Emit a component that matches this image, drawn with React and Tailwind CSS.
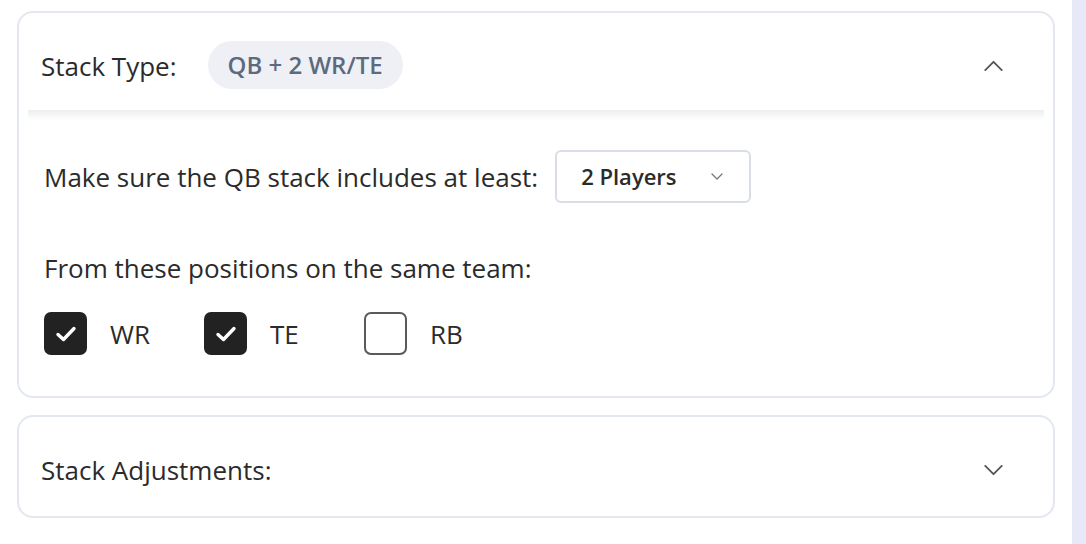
import React, { useState } from 'react';

const Chevron = ({ up, className }) => (
  <svg viewBox="0 0 20 12" className={className} fill="none" stroke="currentColor" strokeWidth="2" strokeLinecap="round" strokeLinejoin="round">
    {up ? <path d="M1 11 L10 2 L19 11" /> : <path d="M1 1 L10 10 L19 1" />}
  </svg>
);

const Check = ({ label, checked, onToggle }) => (
  <button onClick={onToggle} className="flex items-center gap-[23px] w-[160px]">
    <span
      className={
        'w-[43px] h-[43px] rounded-[7px] flex items-center justify-center ' +
        (checked ? 'bg-[#222222]' : 'bg-white border-2 border-[#5a5a5a]')
      }
    >
      {checked && (
        <svg viewBox="0 0 24 20" className="w-[24px] h-[20px]" fill="none" stroke="white" strokeWidth="3.4" strokeLinecap="round" strokeLinejoin="round">
          <path d="M4 10.5 L9.5 15.5 L20 4.5" />
        </svg>
      )}
    </span>
    <span className="text-[26px] leading-[36px] text-[#2b2b2b]">{label}</span>
  </button>
);

export default function App() {
  const [open, setOpen] = useState(true);
  const [positions, setPositions] = useState({ WR: true, TE: true, RB: false });

  const toggle = (key) => setPositions(prev => ({ ...prev, [key]: !prev[key] }));

  return (
    <div className="flex w-[1086px] h-[544px] bg-white overflow-hidden" style={{ fontFamily: '"Open Sans", "Noto Sans", sans-serif' }}>
      <div className="flex-1 flex flex-col gap-[17px] pt-[11px] px-[17px]">

        {/* Stack type panel */}
        <div className="border-2 border-[#e3e7ef] rounded-[16px] bg-white">
          <div className="flex items-center pl-[22px] pr-[50px] pt-[28px] pb-[21px]">
            <span className="text-[26px] leading-[36px] text-[#2b2b2b] pt-[2px]">Stack Type:</span>
            <span className="ml-[31px] h-[48px] px-[20px] rounded-full bg-[#eef0f5] flex items-center text-[24px] font-semibold text-[#5d6a7e]">
              QB + 2 WR/TE
            </span>
            <button onClick={() => setOpen(!open)} className="ml-auto text-[#555555] pt-[1px]">
              <Chevron up={open} className="w-[19px] h-[11px]" />
            </button>
          </div>
          <div className="mx-[9px] h-[10px] bg-gradient-to-b from-[#eceef1] to-white" />

          {open && (
            <div className="pl-[25px] pt-[30px] pb-[41px]">
              <div className="flex items-center gap-[17px]">
                <span className="text-[26px] leading-[36px] text-[#2b2b2b]">Make sure the QB stack includes at least:</span>
                <button className="w-[196px] h-[53px] border-2 border-[#d9dde5] rounded-[6px] flex items-center pl-[24px] pr-[26px]">
                  <span className="text-[22px] font-semibold text-[#2b2b2b]">2 Players</span>
                  <svg viewBox="0 0 12 7" className="ml-auto w-[12px] h-[7px]" fill="none" stroke="#777777" strokeWidth="1.3" strokeLinecap="round" strokeLinejoin="round">
                    <path d="M1 1 L6 6 L11 1" />
                  </svg>
                </button>
              </div>
              <div className="mt-[47px] text-[26px] leading-[36px] text-[#2b2b2b]">From these positions on the same team:</div>
              <div className="mt-[26px] flex">
                {['WR', 'TE', 'RB'].map(p => (
                  <Check key={p} label={p} checked={positions[p]} onToggle={() => toggle(p)} />
                ))}
              </div>
            </div>
          )}
        </div>

        {/* Stack adjustments panel */}
        <div className="border-2 border-[#e3e7ef] rounded-[16px] bg-white h-[103px] flex items-center pl-[22px] pr-[50px] pt-[7px]">
          <span className="text-[26px] leading-[36px] text-[#2b2b2b]">Stack Adjustments:</span>
          <Chevron className="ml-auto w-[19px] h-[11px] text-[#555555]" />
        </div>
      </div>

      <div className="w-[14px] h-full bg-[#e8e9f8]" />
    </div>
  );
}
